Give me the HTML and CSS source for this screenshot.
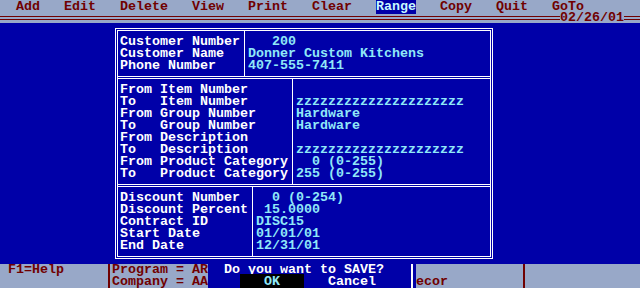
FILE: index.html
```html
<!DOCTYPE html>
<html>

<head>
    <title>Customer Discount - Range</title>
    <meta charset="utf-8">

    <link rel="stylesheet" href="styles.css">
</head>

<body>
    <div class="screen">
        <div class="menubar">
            <div class="menu">  Add   Edit   Delete   View   Print   Clear   <span class="menu-active">Range</span>   Copy   Quit   GoTo</div>
            <div class="rule-row">
                <span class="rule"></span>
                <span class="date">02/26/01</span>
                <span class="rule rule-end"></span>
            </div>
        </div>

        <div class="main">
            <div class="form">
                <div class="section section-customer">
                    <div class="labels">
                        <div class="line">Customer Number</div>
                        <div class="line">Customer Name</div>
                        <div class="line">Phone Number</div>
                    </div>
                    <div class="values">
                        <div class="line">   200</div>
                        <div class="line">Donner Custom Kitchens</div>
                        <div class="line">407-555-7411</div>
                    </div>
                </div>

                <div class="section section-range">
                    <div class="labels">
                        <div class="line">From Item Number</div>
                        <div class="line">To   Item Number</div>
                        <div class="line">From Group Number</div>
                        <div class="line">To   Group Number</div>
                        <div class="line">From Description</div>
                        <div class="line">To   Description</div>
                        <div class="line">From Product Category</div>
                        <div class="line">To   Product Category</div>
                    </div>
                    <div class="values">
                        <div class="line"></div>
                        <div class="line">zzzzzzzzzzzzzzzzzzzzz</div>
                        <div class="line">Hardware</div>
                        <div class="line">Hardware</div>
                        <div class="line"></div>
                        <div class="line">zzzzzzzzzzzzzzzzzzzzz</div>
                        <div class="line">  0 (0-255)</div>
                        <div class="line">255 (0-255)</div>
                    </div>
                </div>

                <div class="section section-discount">
                    <div class="labels">
                        <div class="line">Discount Number</div>
                        <div class="line">Discount Percent</div>
                        <div class="line">Contract ID</div>
                        <div class="line">Start Date</div>
                        <div class="line">End Date</div>
                    </div>
                    <div class="values">
                        <div class="line">  0 (0-254)</div>
                        <div class="line"> 15.0000</div>
                        <div class="line">DISC15</div>
                        <div class="line">01/01/01</div>
                        <div class="line">12/31/01</div>
                    </div>
                </div>
            </div>
        </div>

        <div class="statusbar">
            <div class="status-help">
                <div class="line">F1=Help</div>
            </div>
            <div class="status-rule"></div>
            <div class="status-info">
                <div class="line">Program = AR</div>
                <div class="line">Company = AA</div>
            </div>
            <div class="dialog">
                <div class="dialog-body">
                    <div class="line">Do you want to SAVE?</div>
                    <div class="line dialog-buttons"><span class="button-ok">   OK   </span>   Cancel</div>
                </div>
            </div>
            <div class="status-path">
                <div class="line"></div>
                <div class="line">ecor</div>
            </div>
            <div class="status-rule"></div>
            <div class="status-rest"></div>
        </div>
    </div>
</body>

</html>
```

FILE: styles.css
```css
:root {
    --screen_blue: #0000a8;
    --bar_gray: #98a8c8;
    --dark_red: #700000;
    --field_cyan: #90e8f8;
    --label_white: #ffffff;
}

body {
    margin: 0px;
    background: var(--screen_blue);
    font-family: "Liberation Mono", "DejaVu Sans Mono", monospace;
    font-size: 13.333px;
    font-weight: bold;
    line-height: 12px;
}

.screen {
    width: 640px;
    height: 288px;
    display: flex;
    flex-direction: column;
    overflow: hidden;
}

.line {
    height: 12px;
    white-space: pre;
}

/* top menu */
.menubar {
    flex: 0 0 23px;
    background: var(--bar_gray);
    color: var(--dark_red);
}

.menu {
    height: 12px;
    padding-top: 1px;
    box-sizing: border-box;
    white-space: pre;
}

.menu-active {
    background: var(--screen_blue);
    color: #c8f8ff;
}

.rule-row {
    display: flex;
    height: 11px;
}

.rule {
    flex: 1;
    height: 4px;
    margin-top: 4px;
    box-sizing: border-box;
    border-top: 1px solid var(--dark_red);
    border-bottom: 1px solid var(--dark_red);
}

.rule-end {
    flex: 0 0 16px;
}

.date {
    width: 64px;
}

/* form box */
.main {
    flex: 0 0 241px;
}

.form {
    margin: 5px 0 0 115px;
    width: 378px;
    box-sizing: border-box;
    border: 3px double var(--label_white);
}

.section {
    display: flex;
}

.section + .section {
    border-top: 3px double var(--label_white);
}

.labels {
    box-sizing: border-box;
    padding: 5px 0 4px 2px;
    color: var(--label_white);
}

.values {
    flex: 1;
    padding: 5px 0 4px 3px;
    border-left: 1px solid var(--label_white);
    color: var(--field_cyan);
}

.section-customer .labels {
    width: 126px;
}

.section-range .labels {
    width: 174px;
}

.section-discount .labels {
    width: 134px;
}

/* bottom status bar */
.statusbar {
    flex: 0 0 24px;
    display: flex;
    background: var(--bar_gray);
    color: var(--dark_red);
}

.status-help {
    width: 108px;
    padding-left: 8px;
    box-sizing: border-box;
}

.status-rule {
    width: 2px;
    background: var(--dark_red);
}

.status-info {
    width: 98px;
    padding-left: 2px;
    box-sizing: border-box;
}

.dialog {
    width: 208px;
    padding-right: 3px;
    box-sizing: border-box;
    display: flex;
    background: var(--screen_blue);
}

.dialog-body {
    flex: 1;
    padding-left: 16px;
    border-right: 2px solid var(--label_white);
    color: var(--label_white);
}

.dialog-buttons {
    padding-left: 16px;
}

.button-ok {
    background: #000;
    color: var(--field_cyan);
}

.status-path {
    width: 107px;
}

.status-rest {
    flex: 1;
}
```
